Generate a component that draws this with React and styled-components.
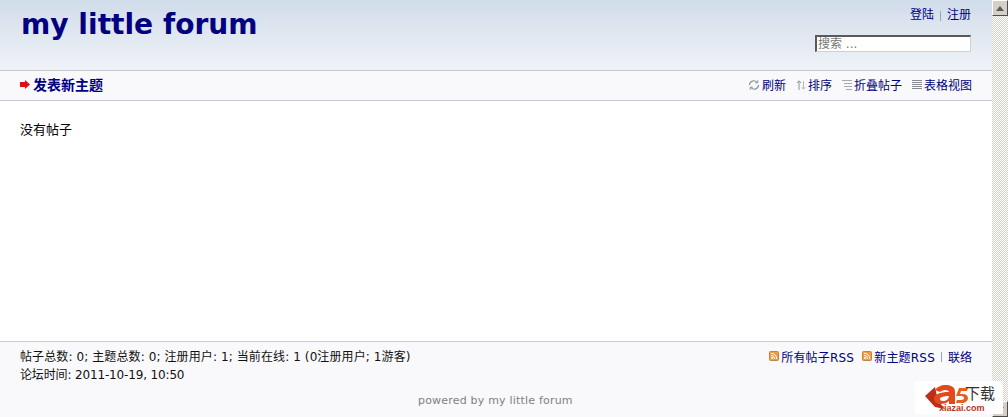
import React from 'react';
import styled, { createGlobalStyle } from 'styled-components';

const navy = '#000080';
const FONT = '"DejaVu Sans", "Noto Sans CJK SC", sans-serif';

const GlobalStyle = createGlobalStyle`
  html, body {
    margin: 0;
    padding: 0;
    height: 100%;
    overflow: hidden;
    background: #fff;
  }
  body {
    font-family: ${FONT};
    font-size: 12px;
    color: #000;
  }
`;

const Page = styled.div`
  position: relative;
  display: flex;
  width: 1008px;
  height: 417px;
  overflow: hidden;
`;

const Main = styled.div`
  flex: 1;
  display: flex;
  flex-direction: column;
  min-width: 0;
`;

const Header = styled.header`
  height: 70px;
  flex: none;
  display: flex;
  justify-content: space-between;
  background: linear-gradient(to bottom, #d1dcea 0%, #f0f3f8 100%);
  border-bottom: 1px solid #bfc7d0;
`;

const Title = styled.h1`
  margin: 7px 0 0 21px;
  font-family: "DejaVu Sans", Verdana, sans-serif;
  font-size: 28.1px;
  line-height: 36px;
  font-weight: bold;
  color: ${navy};
`;

const HeaderRight = styled.div`
  display: flex;
  flex-direction: column;
  align-items: flex-end;
  padding: 7px 21px 0 0;
`;

const UserNav = styled.div`
  display: flex;
  align-items: center;
  height: 16px;
  line-height: 16px;
`;

const NavLink = styled.a`
  color: ${navy};
  text-decoration: none;
`;

const Sep = styled.span`
  width: 1px;
  height: 10px;
  margin: 2px 6px 0 6px;
  background: #9aa6b5;
`;

const SearchBox = styled.input`
  box-sizing: border-box;
  width: 156px;
  height: 17px;
  margin-top: 12px;
  padding: 0 1px;
  font-family: ${FONT};
  font-size: 12px;
  line-height: 15px;
  color: #777;
  background: #fff;
  border-style: solid;
  border-width: 2px 1px 1px 2px;
  border-color: #5a5a5a #d4d0c8 #d4d0c8 #5a5a5a;
  outline: none;

  &::placeholder {
    color: #777;
    opacity: 1;
  }
`;

const SubNav = styled.nav`
  height: 30px;
  flex: none;
  box-sizing: border-box;
  display: flex;
  align-items: center;
  justify-content: space-between;
  padding: 0 20px 2px;
  background: #f9f9fb;
  border-bottom: 1px solid #c8ccd2;
`;

const NewTopic = styled.a`
  display: flex;
  align-items: center;
  gap: 3px;
  margin-top: -1px;
  font-size: 14px;
  font-weight: bold;
  color: ${navy};
  text-decoration: none;
`;

const Tools = styled.div`
  display: flex;
  align-items: center;
  gap: 10px;
`;

const Tool = styled.a`
  display: flex;
  align-items: center;
  gap: 2px;
  color: ${navy};
  text-decoration: none;
`;

const Content = styled.main`
  flex: 1;
  padding: 20px 20px 0;
  font-size: 13px;
  line-height: 18px;
  background: #fff;
`;

const Footer = styled.footer`
  height: 76px;
  flex: none;
  box-sizing: border-box;
  padding: 7px 20px 0;
  background: #f9f9fb;
  border-top: 1px solid #c8ccd2;
`;

const FooterTop = styled.div`
  display: flex;
  justify-content: space-between;
`;

const Stats = styled.div`
  color: #111;
`;

const StatLine = styled.div`
  line-height: 17.5px;
  letter-spacing: ${({ $spacing }) => $spacing};
`;

const FooterLinks = styled.div`
  display: flex;
  align-items: center;
  height: 14px;
`;

const RssLink = styled.a`
  display: flex;
  align-items: center;
  gap: 2px;
  margin-left: ${({ $first }) => ($first ? '0' : '8px')};
  color: ${navy};
  text-decoration: none;
  letter-spacing: 0.2px;
`;

const Powered = styled.div`
  margin-top: 9px;
  padding-left: 398px;
  font-size: 11px;
  line-height: 16px;
  letter-spacing: 0.2px;
  color: #808080;
`;

const Scrollbar = styled.div`
  width: 16px;
  flex: none;
  display: flex;
  flex-direction: column;
  justify-content: space-between;
  background-color: #f1efe8;
  background-image: repeating-conic-gradient(#d4d0c8 0 25%, #fff 0 50%);
  background-size: 2px 2px;
`;

const ScrollButton = styled.div`
  width: 16px;
  height: 16px;
  box-sizing: border-box;
  display: flex;
  align-items: center;
  justify-content: center;
  background: #d4d0c8;
  border: 1px solid;
  border-color: #fff #4e4c48 #4e4c48 #fff;
`;

const Watermark = styled.div`
  position: absolute;
  right: 5px;
  bottom: 3px;
  width: 88px;
  height: 33px;
  background: #fff;
`;

const WatermarkMark = styled.svg`
  position: absolute;
  left: 0;
  top: 0;
`;

const WatermarkCn = styled.span`
  position: absolute;
  left: 50px;
  top: 4px;
  font-size: 15px;
  line-height: 18px;
  color: #333;
`;

const WatermarkUrl = styled.span`
  position: absolute;
  left: 24px;
  top: 21px;
  font-family: "Liberation Sans", Arial, sans-serif;
  font-size: 9px;
  line-height: 12px;
  font-weight: bold;
  color: #b8341c;
`;

const RedArrow = () => (
  <svg width="10" height="9" viewBox="0 0 10 9">
    <path d="M0 2h5V0L10 4.5 5 9V7H0z" fill="#e01010" />
  </svg>
);

const RefreshIcon = () => (
  <svg width="12" height="12" viewBox="0 0 12 12" fill="none" stroke="#8a939c" strokeWidth="1.2">
    <path d="M1.5 6a4.2 4.2 0 0 1 7.4-2.7" />
    <path d="M10.5 6a4.2 4.2 0 0 1-7.4 2.7" />
    <path d="M9.8 1.2v2.6H7.2M2.2 10.8V8.2h2.6" strokeWidth="1" />
  </svg>
);

const SortIcon = () => (
  <svg width="10" height="12" viewBox="0 0 10 12" fill="none" stroke="#8a939c" strokeWidth="1">
    <path d="M3 11V2M1 4l2-2.2L5 4" />
    <path d="M7.5 2v8M5.8 8.2l1.7 2 1.7-2" stroke="#b4bac0" />
  </svg>
);

const FoldIcon = () => (
  <svg width="10" height="11" viewBox="0 0 10 11" stroke="#a4aab0" strokeWidth="1">
    <path d="M0 1.5h10M2 4.5h8M2 7.5h8M4 10.5h6" />
  </svg>
);

const TableIcon = () => (
  <svg width="10" height="11" viewBox="0 0 10 11" stroke="#858b92" strokeWidth="1">
    <path d="M0 1.5h10M0 3.5h10M0 5.5h10M0 7.5h10M0 9.5h10" />
  </svg>
);

const RssIcon = () => (
  <svg width="10" height="10" viewBox="0 0 10 10">
    <rect x="0.5" y="0.5" width="9" height="9" rx="1" fill="#ef9b4a" stroke="#c9823f" />
    <circle cx="3" cy="7" r="1" fill="#fff" />
    <path d="M2 4.4a3.6 3.6 0 0 1 3.6 3.6M2 2.2A5.8 5.8 0 0 1 7.8 8" fill="none" stroke="#fff" />
  </svg>
);

const UpArrow = () => (
  <svg width="8" height="5" viewBox="0 0 8 5">
    <path d="M4 0l4 5H0z" fill="#5b5a55" />
  </svg>
);

const DownArrow = () => (
  <svg width="8" height="5" viewBox="0 0 8 5">
    <path d="M4 5L8 0H0z" fill="#5b5a55" />
  </svg>
);

const A5Mark = () => (
  <WatermarkMark width="60" height="33" viewBox="0 0 60 33">
    <path d="M10 15L20 6l3 14 7 8-10-2z" fill="#bb2f18" />
    <path d="M31 4c-5 0-9 2-11 5l5 2c1-1 3-2 5-2 3 0 4 1 4 2-9 0-15 2-15 7 0 3 3 5 6 5 4 0 7-1 9-3v3h6V11c0-5-4-7-9-7zm3 11c0 3-3 5-6 5-2 0-3-1-3-2 0-2 4-3 9-3z" fill="#e2491d" />
    <path d="M44 7h9l-1 3h-6l-1 3h3c3 0 5 2 5 4 0 3-3 5-6 5h-6l1-3h4c2 0 3-1 3-2s-1-2-3-2h-5z" fill="#e8601e" />
  </WatermarkMark>
);

export default function App() {
  return (
    <Page>
      <GlobalStyle />
      <Main>
        <Header>
          <Title>my little forum</Title>
          <HeaderRight>
            <UserNav>
              <NavLink href="#">登陆</NavLink>
              <Sep />
              <NavLink href="#">注册</NavLink>
            </UserNav>
            <SearchBox placeholder="搜索 ..." />
          </HeaderRight>
        </Header>
        <SubNav>
          <NewTopic href="#">
            <RedArrow />
            发表新主题
          </NewTopic>
          <Tools>
            <Tool href="#"><RefreshIcon />刷新</Tool>
            <Tool href="#"><SortIcon />排序</Tool>
            <Tool href="#"><FoldIcon />折叠帖子</Tool>
            <Tool href="#"><TableIcon />表格视图</Tool>
          </Tools>
        </SubNav>
        <Content>没有帖子</Content>
        <Footer>
          <FooterTop>
            <Stats>
              <StatLine $spacing="0.1px">帖子总数: 0; 主题总数: 0; 注册用户: 1; 当前在线: 1 (0注册用户; 1游客)</StatLine>
              <StatLine $spacing="-0.15px">论坛时间: 2011-10-19, 10:50</StatLine>
            </Stats>
            <FooterLinks>
              <RssLink href="#" $first><RssIcon />所有帖子RSS</RssLink>
              <RssLink href="#"><RssIcon />新主题RSS</RssLink>
              <Sep />
              <NavLink href="#">联络</NavLink>
            </FooterLinks>
          </FooterTop>
          <Powered>powered by my little forum</Powered>
        </Footer>
      </Main>
      <Scrollbar>
        <ScrollButton><UpArrow /></ScrollButton>
        <ScrollButton><DownArrow /></ScrollButton>
      </Scrollbar>
      <Watermark>
        <A5Mark />
        <WatermarkCn>下载</WatermarkCn>
        <WatermarkUrl>xiazai.com</WatermarkUrl>
      </Watermark>
    </Page>
  );
}
